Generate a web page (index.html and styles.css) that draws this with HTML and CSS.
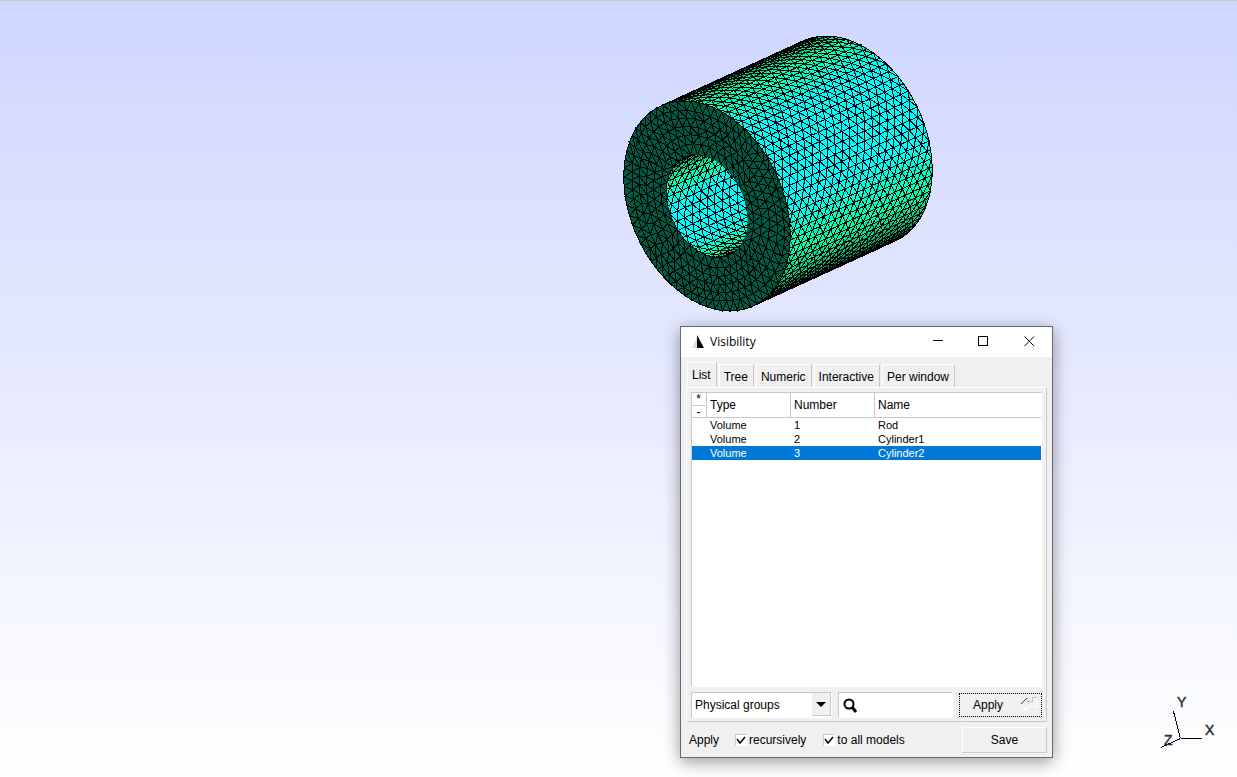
FILE: index.html
```
<!DOCTYPE html>
<html lang="en">

<head>
    <meta charset="UTF-8">
    <meta name="viewport" content="width=device-width, initial-scale=1.0">
    <title>Visibility</title>
    <link rel="stylesheet" href="styles.css">
</head>

<body>
    <main class="viewport">
        <svg id="mesh" class="mesh" viewBox="0 0 312 280" aria-label="Cylinder mesh"></svg>

        <svg class="axes" viewBox="0 0 80 70" aria-label="Axes">
            <path d="M23.5 47.5H45M23.5 47.5L16.500 20.500M23.500 47.500L4 56.500" />
            <text x="20" y="16">Y</text>
            <text x="48" y="44">X</text>
            <text x="7" y="54">Z</text>
        </svg>

        <section class="dialog">
            <header class="titlebar">
                <svg class="logo" width="14" height="14" viewBox="0 0 14 14">
                    <path d="M6 1L0 13H6Z" fill="#d8dcdc" />
                    <path d="M5 0L12 13H5Z" fill="#000a06" />
                </svg>
                <h1>Visibility</h1>
                <button type="button" aria-label="Minimize">
                    <svg width="11" height="11"><path d="M1 4.500H11" /></svg>
                </button>
                <button type="button" aria-label="Maximize">
                    <svg width="11" height="11"><path d="M.5 .5H9.500V9.500H.5Z" /></svg>
                </button>
                <button type="button" aria-label="Close">
                    <svg class="close" width="11" height="11"><path d="M.5 .5L10 10M10 .5L.5 10" /></svg>
                </button>
            </header>

            <nav class="tabs">
                <button type="button" class="tab active">List</button>
                <button type="button" class="tab">Tree</button>
                <button type="button" class="tab">Numeric</button>
                <button type="button" class="tab">Interactive</button>
                <button type="button" class="tab">Per window</button>
            </nav>

            <div class="panel">
                <div class="list">
                    <table>
                        <colgroup>
                            <col class="col-select">
                            <col class="col-data">
                            <col class="col-data">
                            <col>
                        </colgroup>
                        <thead>
                            <tr>
                                <th class="select-cell">
                                    <button type="button" aria-label="Select all">*</button>
                                    <button type="button" aria-label="Select none">-</button>
                                </th>
                                <th>Type</th>
                                <th>Number</th>
                                <th>Name</th>
                            </tr>
                        </thead>
                        <tbody>
                            <tr><td></td><td>Volume</td><td>1</td><td>Rod</td></tr>
                            <tr><td></td><td>Volume</td><td>2</td><td>Cylinder1</td></tr>
                            <tr class="selected"><td></td><td>Volume</td><td>3</td><td>Cylinder2</td></tr>
                        </tbody>
                    </table>
                </div>
                <div class="filters">
                    <div class="choice">
                        <select aria-label="Entity type">
                            <option>Physical groups</option>
                        </select>
                        <span class="arrow"><svg width="10" height="5"><path d="M0 0H10L5 5Z" /></svg></span>
                    </div>
                    <label class="search">
                        <svg width="15" height="15" viewBox="0 0 15 15">
                            <circle cx="6" cy="6" r="4.500" />
                            <path d="M9 9L13 14" />
                        </svg>
                        <input type="text" aria-label="Search">
                    </label>
                    <button type="submit" class="apply">
                        <span>Apply</span>
                        <svg width="18" height="14" viewBox="0 0 18 14">
                            <path d="M.5 7.500L7 1" stroke="#404040" />
                            <path d="M7.500 1V4.500H12.500V.5H17" stroke="#c0c0c0" />
                            <path d="M.5 7.500L6.500 13V9.500H16.500V1" stroke="#fff" />
                        </svg>
                    </button>
                </div>
            </div>

            <footer class="options">
                <span class="caption">Apply</span>
                <label class="check recursive"><input type="checkbox" checked>recursively</label>
                <label class="check"><input type="checkbox" checked>to all models</label>
                <button type="button" class="save">Save</button>
            </footer>
        </section>
    </main>

    <script src="mesh.js"></script>
</body>

</html>
```

FILE: styles.css
```
* {
    box-sizing: border-box;
}

body {
    margin: 0;
    font-family: "Liberation Sans", Arial, sans-serif;
    font-size: 12px;
    color: #000;
}

button,
input,
select {
    font: inherit;
    color: inherit;
    margin: 0;
    padding: 0;
    border: 0;
    border-radius: 0;
    outline: 0;
    background: none;
}

.viewport {
    position: relative;
    min-height: 100vh;
    border-top: 1px solid #c8c8c8;
    background: linear-gradient(#cfd6ff, #fff);
    overflow: hidden;
}

.mesh {
    position: absolute;
    left: 622px;
    top: 33px;
    width: 312px;
    height: 280px;
    shape-rendering: crispEdges;
}

.mesh polygon {
    stroke: #000;
    stroke-width: 1;
}

.axes {
    position: absolute;
    right: 0;
    bottom: 16px;
    width: 80px;
    height: 70px;
}

.axes path {
    stroke: #000;
    fill: none;
    shape-rendering: crispEdges;
}

.axes text {
    font-size: 14px;
    fill: #333;
    stroke: #333;
    stroke-width: 0.5;
}

/* Dialog window */
.dialog {
    position: absolute;
    left: 680px;
    top: 325px;
    width: 373px;
    border: 1px solid #67676f;
    background: #f0f0f0;
    box-shadow: 0 4px 16px rgba(0, 0, 0, 0.4);
}

.titlebar {
    display: flex;
    align-items: center;
    height: 30px;
    padding-left: 11px;
    background: #fff;
}

.titlebar h1 {
    flex: 1;
    margin: 0 0 0 4px;
    padding-bottom: 2px;
    font: 12px "Open Sans", sans-serif;
}

.titlebar button {
    display: flex;
    align-items: center;
    justify-content: center;
    width: 46px;
    height: 28px;
    margin-bottom: 2px;
}

.titlebar button path {
    stroke: #000;
    fill: none;
    shape-rendering: crispEdges;
}

.titlebar .close path {
    shape-rendering: auto;
}

.tabs {
    display: flex;
    align-items: flex-end;
    gap: 2px;
    height: 30px;
    padding: 0 6px;
}

.tab {
    height: 23px;
    padding: 1px 5px 0 4px;
    border: 1px solid #fff;
    border-right-color: #c8c8c8;
    border-bottom: 0;
}

.tab.active {
    height: 25px;
    padding-bottom: 1px;
}

.panel {
    margin: 0 5px;
    padding: 4px 4px 3px;
    border: 1px solid #fff;
    border-right-color: #c8c8c8;
    border-bottom-color: #c8c8c8;
}

.list {
    height: 295px;
    border: 1px solid #c8c8c8;
    border-right-color: #fff;
    border-bottom-color: #fff;
    background: #fff;
}

table {
    width: 100%;
    border-collapse: separate;
    border-spacing: 0;
    table-layout: fixed;
    font-size: 11px;
}

.col-select {
    width: 14px;
}

.col-data {
    width: 84px;
}

th {
    height: 25px;
    padding: 0 0 0 3px;
    border-left: 1px solid #c8c8c8;
    border-bottom: 1px solid #c8c8c8;
    font-size: 12px;
    font-weight: normal;
    text-align: left;
}

.select-cell {
    padding: 0;
    border-left: 0;
}

.select-cell button {
    display: block;
    width: 13px;
    height: 12px;
    line-height: 12px;
    text-align: center;
}

.select-cell button + button {
    border-top: 1px solid #c8c8c8;
}

td {
    height: 14px;
    padding: 0 0 0 4px;
    line-height: 14px;
}

.selected {
    background: #0078d7;
    color: #fff;
}

.filters {
    display: flex;
    align-items: center;
    gap: 6px;
    margin-top: 5px;
    height: 26px;
}

.choice {
    position: relative;
    flex: none;
    width: 141px;
    height: 26px;
    border: 1px solid #c8c8c8;
    border-right-color: #fff;
    border-bottom-color: #fff;
    background: #fff;
}

.choice select {
    appearance: none;
    width: 100%;
    height: 24px;
    padding-left: 3px;
}

.choice .arrow {
    position: absolute;
    top: 0;
    right: 0;
    display: flex;
    align-items: center;
    justify-content: center;
    width: 19px;
    height: 23px;
    border-right: 1px solid #c8c8c8;
    border-bottom: 1px solid #c8c8c8;
    background: #f0f0f0;
    pointer-events: none;
}

.search {
    display: flex;
    align-items: center;
    flex: 1;
    min-width: 0;
    height: 26px;
    padding-left: 4px;
    border: 1px solid #c8c8c8;
    border-right-color: #fff;
    border-bottom-color: #fff;
    background: #fff;
}

.search svg {
    flex: none;
    fill: none;
    stroke: #000;
    stroke-width: 2;
}

.search path {
    stroke-width: 3;
}

.search input {
    flex: 1;
    min-width: 0;
    height: 23px;
    padding-left: 3px;
}

.apply {
    display: flex;
    flex: none;
    align-items: center;
    width: 83px;
    height: 24px;
    padding-left: 13px;
    border: 1px dotted #000;
}

.apply svg {
    margin-left: auto;
    margin-right: 3px;
    margin-bottom: 2px;
    fill: none;
    shape-rendering: crispEdges;
}

.options {
    display: flex;
    align-items: center;
    height: 35px;
    padding: 0 5px 0 8px;
}

.caption {
    width: 46px;
}

.check {
    display: flex;
    align-items: center;
    gap: 2px;
}

.recursive {
    margin-right: 17px;
}

.check input {
    appearance: none;
    width: 12px;
    height: 12px;
    border: 1px solid #c8c8c8;
    border-right-color: #fff;
    border-bottom-color: #fff;
    background: #fff;
}

.check input:checked {
    background: #fff url("data:image/svg+xml,%3Csvg xmlns='http://www.w3.org/2000/svg' viewBox='0 0 10 10'%3E%3Cpath d='M1 4L4 8L9 2' fill='none' stroke='black' stroke-width='1.400'/%3E%3C/svg%3E");
}

.save {
    width: 85px;
    height: 26px;
    margin-left: auto;
    border: 1px solid #fff;
    border-right-color: #c8c8c8;
    border-bottom-color: #c8c8c8;
}
```

FILE: mesh.js
```
const TAU = Math.PI * 2;
const INNER = 0.49;
const COLUMNS = 19;

// project a point of the cylinder, depth 0 is the front face
function project(r, angle, depth) {
    const c = Math.cos(angle) * r;
    const s = Math.sin(angle) * r;
    return [85 + 80 * c - 23 * s + 142 * depth, 172 - 105 * s - 65 * depth];
}

function shade(angle) {
    const highlight = Math.max(0, Math.cos(angle - 0.42));
    const glow = Math.min(1, Math.pow(highlight, 6) * 1.7);
    const light = Math.min(1, 0.45 + highlight * 0.85);
    return "rgb(0," + Math.round(255 * light) + "," + Math.round(light * (165 + 90 * glow)) + ")";
}

function triangle(a, b, c, color) {
    const points = [a, b, c].map(p => p[0].toFixed(1) + "," + p[1].toFixed(1)).join(" ");
    return '<polygon points="' + points + '" fill="' + color + '"/>';
}

// rows of triangles along the axis, every second row is shifted by half an edge
function wall(radius, count, from, to, flip) {
    let out = "";
    const step = TAU / count;
    const first = Math.floor(from / step);
    const last = Math.ceil(to / step);
    const node = (row, k) => {
        const depth = (k + (row & 1) / 2) / COLUMNS;
        return project(radius, row * step, Math.min(1, Math.max(0, depth)));
    };
    for (let row = first; row < last; row++) {
        const color = shade((row + 0.5) * step + (flip ? Math.PI : 0));
        const even = row & 1 ? row + 1 : row;
        const odd = row & 1 ? row : row + 1;
        for (let k = -1; k < COLUMNS; k++) {
            out += triangle(node(odd, k), node(odd, k + 1), node(even, k + 1), color);
            if (k >= 0) out += triangle(node(even, k), node(even, k + 1), node(odd, k), color);
        }
    }
    return out;
}

function ring(index, total) {
    const r = 1 - (1 - INNER) * index / total;
    const count = Math.round(68 * r);
    const nodes = [];
    for (let i = 0; i < count; i++) {
        const inside = index > 0 && index < total;
        const wobble = inside ? Math.sin(i * 12.9 + index * 7.3) : 0;
        const angle = (i + (index % 2) / 2 + wobble * 0.25) / count * TAU;
        nodes.push({ angle, point: project(r + wobble * 0.018, angle, 0) });
    }
    return nodes;
}

function face() {
    const total = 6;
    let out = "";
    for (let k = 0; k < total; k++) {
        const a = ring(k, total);
        const b = ring(k + 1, total);
        const at = (nodes, i) => nodes[i % nodes.length];
        const angleAt = (nodes, i) => at(nodes, i).angle + (i >= nodes.length ? TAU : 0);
        let i = 0;
        let j = 0;
        while (i < a.length || j < b.length) {
            const moveOuter = j >= b.length || (i < a.length && angleAt(a, i + 1) < angleAt(b, j + 1));
            const next = moveOuter ? at(a, i + 1) : at(b, j + 1);
            out += triangle(at(a, i).point, at(b, j).point, next.point, "#005a42");
            if (moveOuter) i++;
            else j++;
        }
    }
    return out;
}

function outline(radius) {
    const points = [];
    for (let i = 0; i < 72; i++) points.push(project(radius, i / 72 * TAU, 0).join());
    return points.join(" ");
}

document.getElementById("mesh").innerHTML =
    wall(1, 76, -1.26, 1.88, false) +
    face() +
    '<clipPath id="hole"><polygon points="' + outline(INNER) + '"/></clipPath>' +
    '<g clip-path="url(#hole)">' + wall(INNER, 38, 1.88, 5.02, true) + "</g>";
```
